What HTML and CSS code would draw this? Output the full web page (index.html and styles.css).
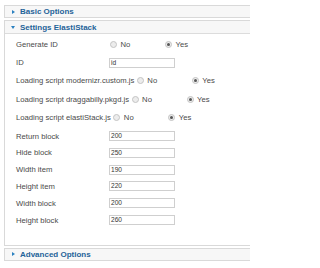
FILE: index.html
```html
<!DOCTYPE html>
<html>
<head>
<meta charset="utf-8">
<link rel="stylesheet" href="styles.css">
</head>
<body>
<div class="sliders">
  <div class="panel">
    <div class="head closed"><span class="arrow-right"></span><span class="title">Basic Options</span></div>
  </div>
  <div class="panel">
    <div class="head open"><span class="arrow-down"></span><span class="title">Settings ElastiStack</span></div>
    <div class="content">
      <div class="row tall">
        <span class="lbl rl">Generate ID</span>
        <span class="opt"><span class="radio"></span>No</span>
        <span class="opt"><span class="radio on"></span>Yes</span>
      </div>
      <div class="row tall">
        <span class="lbl il">ID</span>
        <span class="field">id</span>
      </div>
      <div class="row tall">
        <span class="lbl rl">Loading script modernizr.custom.js</span>
        <span class="opt"><span class="radio"></span>No</span>
        <span class="opt"><span class="radio on"></span>Yes</span>
      </div>
      <div class="row tall">
        <span class="lbl rl">Loading script draggabilly.pkgd.js</span>
        <span class="opt"><span class="radio"></span>No</span>
        <span class="opt"><span class="radio on"></span>Yes</span>
      </div>
      <div class="row tall">
        <span class="lbl rl">Loading script elastiStack.js</span>
        <span class="opt"><span class="radio"></span>No</span>
        <span class="opt"><span class="radio on"></span>Yes</span>
      </div>
      <div class="row short first">
        <span class="lbl il">Return block</span>
        <span class="field">200</span>
      </div>
      <div class="row short">
        <span class="lbl il">Hide block</span>
        <span class="field">250</span>
      </div>
      <div class="row short">
        <span class="lbl il">Width item</span>
        <span class="field">190</span>
      </div>
      <div class="row short">
        <span class="lbl il">Height item</span>
        <span class="field">220</span>
      </div>
      <div class="row short">
        <span class="lbl il">Width block</span>
        <span class="field">200</span>
      </div>
      <div class="row short">
        <span class="lbl il">Height block</span>
        <span class="field">260</span>
      </div>
    </div>
  </div>
  <div class="panel">
    <div class="head closed"><span class="arrow-right"></span><span class="title">Advanced Options</span></div>
  </div>
</div>
</body>
</html>
```

FILE: styles.css
```css
html, body {
  margin: 0;
  padding: 0;
  background: #ffffff;
  overflow: hidden;
}
body {
  font-family: "Liberation Sans", Arial, sans-serif;
}
.sliders {
  box-sizing: border-box;
  padding: 5px 0 0 4px;
  width: 250px;
}
.panel {
  border: 1px solid #d9d9d9;
  border-right: none;
  margin-bottom: 2px;
  background: #ffffff;
}
.head {
  display: flex;
  align-items: center;
  background: #f7f7f7;
  height: 11px;
}
.head.open {
  height: 12px;
  border-bottom: 1px solid #dcdcdc;
}
.title {
  font-size: 8px;
  font-weight: bold;
  color: #1f6399;
  line-height: 11px;
}
.arrow-right {
  width: 0;
  height: 0;
  border-top: 2.5px solid transparent;
  border-bottom: 2.5px solid transparent;
  border-left: 3px solid #2a80c0;
  margin-left: 7px;
  margin-right: 5px;
}
.arrow-down {
  width: 0;
  height: 0;
  border-left: 2.5px solid transparent;
  border-right: 2.5px solid transparent;
  border-top: 3px solid #2a80c0;
  margin-left: 6px;
  margin-right: 5px;
  margin-top: 1px;
}
.content {
  padding: 1.2px 0 16.5px 11px;
  display: flex;
  flex-direction: column;
}
.row {
  display: flex;
  align-items: center;
  font-size: 7.7px;
  color: #4a4a4a;
  white-space: nowrap;
}
.row.tall {
  height: 18.25px;
}
.row.short {
  height: 16.8px;
}
.row.first {
  margin-top: 1.2px;
}
.lbl.rl {
  min-width: 91.5px;
  margin-right: 2.5px;
}
.lbl.il {
  width: 93px;
}
.opt {
  display: inline-flex;
  align-items: center;
  width: 55px;
  color: #4a4a4a;
}
.radio {
  box-sizing: border-box;
  width: 7px;
  height: 7px;
  border-radius: 50%;
  border: 1px solid #c4c4c4;
  background: #ececec;
  margin-right: 3.5px;
  display: inline-flex;
  align-items: center;
  justify-content: center;
}
.radio.on::after {
  content: "";
  width: 3px;
  height: 3px;
  border-radius: 50%;
  background: #555555;
}
.field {
  box-sizing: border-box;
  width: 66px;
  height: 10px;
  border: 1px solid #cfcfcf;
  background: #ffffff;
  font-size: 6.6px;
  line-height: 8px;
  padding-left: 1px;
  color: #333333;
}
```
